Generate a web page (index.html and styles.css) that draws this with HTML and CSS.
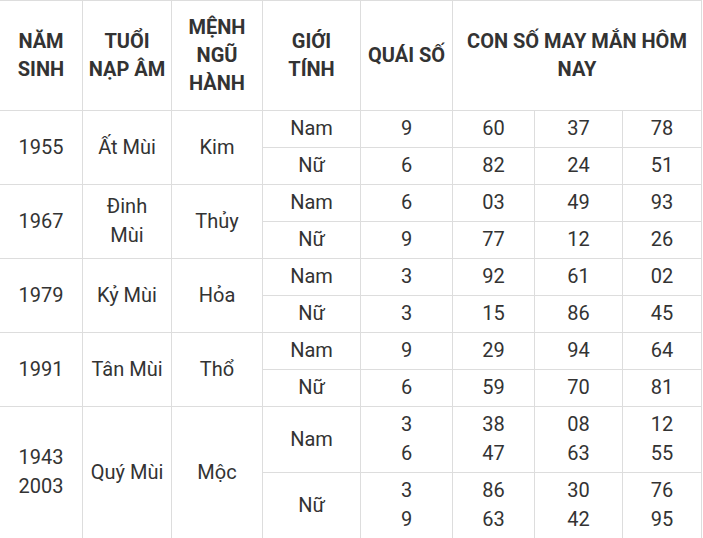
FILE: index.html
```html
<!DOCTYPE html>
<html lang="vi">
<head>
<meta charset="utf-8">
<link rel="stylesheet" href="styles.css">
</head>
<body>
<table class="lucky">
  <colgroup>
    <col class="c1"><col class="c2"><col class="c3"><col class="c4"><col class="c5"><col class="c6"><col class="c7"><col class="c8">
  </colgroup>
  <thead>
    <tr>
      <th>NĂM SINH</th>
      <th>TUỔI NẠP ÂM</th>
      <th>MỆNH NGŨ HÀNH</th>
      <th>GIỚI TÍNH</th>
      <th>QUÁI SỐ</th>
      <th colspan="3">CON SỐ MAY MẮN HÔM NAY</th>
    </tr>
  </thead>
  <tbody>
    <tr><td rowspan="2">1955</td><td rowspan="2">Ất Mùi</td><td rowspan="2">Kim</td><td>Nam</td><td>9</td><td>60</td><td>37</td><td>78</td></tr>
    <tr><td>Nữ</td><td>6</td><td>82</td><td>24</td><td>51</td></tr>
    <tr><td rowspan="2">1967</td><td rowspan="2">Đinh Mùi</td><td rowspan="2">Thủy</td><td>Nam</td><td>6</td><td>03</td><td>49</td><td>93</td></tr>
    <tr><td>Nữ</td><td>9</td><td>77</td><td>12</td><td>26</td></tr>
    <tr><td rowspan="2">1979</td><td rowspan="2">Kỷ Mùi</td><td rowspan="2">Hỏa</td><td>Nam</td><td>3</td><td>92</td><td>61</td><td>02</td></tr>
    <tr><td>Nữ</td><td>3</td><td>15</td><td>86</td><td>45</td></tr>
    <tr><td rowspan="2">1991</td><td rowspan="2">Tân Mùi</td><td rowspan="2">Thổ</td><td>Nam</td><td>9</td><td>29</td><td>94</td><td>64</td></tr>
    <tr><td>Nữ</td><td>6</td><td>59</td><td>70</td><td>81</td></tr>
    <tr><td rowspan="2">1943<br>2003</td><td rowspan="2">Quý Mùi</td><td rowspan="2">Mộc</td><td>Nam</td><td>3<br>6</td><td>38<br>47</td><td>08<br>63</td><td>12<br>55</td></tr>
    <tr><td>Nữ</td><td>3<br>9</td><td>86<br>63</td><td>30<br>42</td><td>76<br>95</td></tr>
  </tbody>
</table>
</body>
</html>
```
FILE: styles.css
```css
html, body {
  margin: 0;
  padding: 0;
  background: #ffffff;
}
body {
  font-family: Roboto, "Liberation Sans", sans-serif;
  color: #333333;
}
.lucky {
  border-collapse: collapse;
  table-layout: fixed;
  width: 702px;
  margin-left: -1px;
  font-size: 20px;
}
.c1 { width: 83px; }
.c2 { width: 89px; }
.c3 { width: 91px; }
.c4 { width: 98px; }
.c5 { width: 92px; }
.c6 { width: 82px; }
.c7 { width: 88px; }
.c8 { width: 79px; }
.lucky th, .lucky td {
  border: 1px solid #dddddd;
  text-align: center;
  vertical-align: middle;
  padding: 3px 6px 4px;
  line-height: 29px;
}
.lucky th {
  font-weight: 700;
  line-height: 28px;
  padding: 12px 4px 13px;
  height: 84px;
}
```
